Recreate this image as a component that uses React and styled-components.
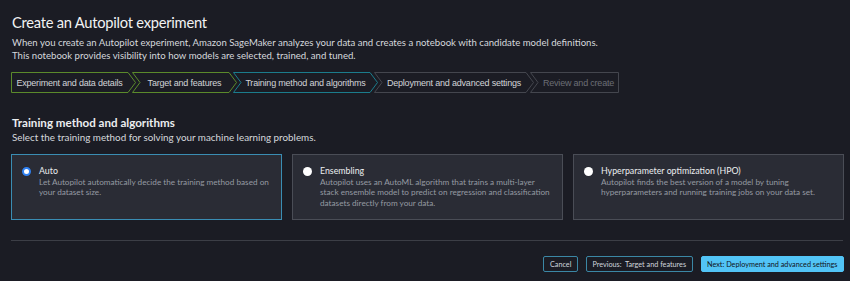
import React from 'react';
import styled, { createGlobalStyle } from 'styled-components';

const GlobalStyle = createGlobalStyle`
  html, body {
    margin: 0;
    padding: 0;
    background: #1b1c24;
  }
  body {
    font-family: Lato, "Noto Sans", sans-serif;
    color: #e9ebed;
  }
`;

const steps = [
  { label: 'Experiment and data details', width: 125, color: '#5b8a2b', state: 'done' },
  { label: 'Target and features', width: 105, color: '#5b8a2b', state: 'done' },
  { label: 'Training method and algorithms', width: 145, color: '#1b7c8c', state: 'current' },
  { label: 'Deployment and advanced settings', width: 160, color: '#44464e', state: 'todo' },
  { label: 'Review and create', width: 89, color: '#44464e', state: 'disabled' },
];

const methods = [
  {
    title: 'Auto',
    lines: ['Let Autopilot automatically decide the training method based on', 'your dataset size.'],
    selected: true,
  },
  {
    title: 'Ensembling',
    lines: [
      'Autopilot uses an AutoML algorithm that trains a multi-layer',
      'stack ensemble model to predict on regression and classification',
      'datasets directly from your data.',
    ],
  },
  {
    title: 'Hyperparameter optimization (HPO)',
    lines: [
      'Autopilot finds the best version of a model by tuning',
      'hyperparameters and running training jobs on your data set.',
    ],
  },
];

const STEP_H = 21;
const TIP = 8;

const chevronPoints = (w, first, last) => {
  const h = STEP_H - 1;
  const m = h / 2;
  const right = last
    ? [`${w - 0.5},0.5`, `${w - 0.5},${h + 0.5}`]
    : [`${w - TIP},0.5`, `${w - 0.5},${m + 0.5}`, `${w - TIP},${h + 0.5}`];
  const left = first ? [`0.5,${h + 0.5}`, '0.5,0.5'] : ['0.5,' + (h + 0.5), `${TIP},${m + 0.5}`, '0.5,0.5'];
  return [...right, ...left].join(' ');
};

const Step = ({ label, width, color, state, first, last }) => (
  <StepItem $width={width} $first={first} $last={last} $state={state}>
    <svg width={width} height={STEP_H}>
      <polygon points={chevronPoints(width, first, last)} fill="none" stroke={color} strokeWidth="1" />
    </svg>
    <span>{label}</span>
  </StepItem>
);

const Radio = ({ checked }) => <RadioDot $checked={checked} />;

export default function App() {
  return (
    <>
      <GlobalStyle />
      <Page>
        <Title>Create an Autopilot experiment</Title>
        <Intro>
          When you create an Autopilot experiment, Amazon SageMaker analyzes your data and creates a notebook with candidate model definitions.
          <br />
          This notebook provides visibility into how models are selected, trained, and tuned.
        </Intro>

        <Stepper>
          {steps.map((s, i) => (
            <Step key={s.label} {...s} first={i === 0} last={i === steps.length - 1} />
          ))}
        </Stepper>

        <SectionTitle>Training method and algorithms</SectionTitle>
        <SectionHint>Select the training method for solving your machine learning problems.</SectionHint>

        <CardRow>
          {methods.map((m) => (
            <Card key={m.title} $selected={m.selected}>
              <Radio checked={m.selected} />
              <CardBody>
                <CardTitle>{m.title}</CardTitle>
                <CardText>
                  {m.lines.map((l, i) => (
                    <React.Fragment key={i}>
                      {i > 0 && <br />}
                      {l}
                    </React.Fragment>
                  ))}
                </CardText>
              </CardBody>
            </Card>
          ))}
        </CardRow>

        <Divider />

        <Footer>
          <Button>Cancel</Button>
          <Button>Previous:&nbsp; Target and features</Button>
          <Button $primary>Next: Deployment and advanced settings</Button>
        </Footer>
      </Page>
    </>
  );
}

const Page = styled.div`
  padding: 11px 6px 0 11px;
  display: flex;
  flex-direction: column;
`;

const Title = styled.h1`
  margin: 0 0 0 1px;
  font-size: 14.7px;
  line-height: 22px;
  font-weight: 400;
  letter-spacing: -0.25px;
  color: #f2f3f3;
`;

const Intro = styled.p`
  margin: 3px 0 0 1px;
  font-size: 9.6px;
  line-height: 13px;
  color: #d5d8dc;
`;

const Stepper = styled.div`
  display: flex;
  margin-top: 10px;
  height: ${STEP_H}px;
`;

const StepItem = styled.div`
  position: relative;
  flex: none;
  width: ${(p) => p.$width}px;
  height: ${STEP_H}px;
  margin-left: ${(p) => (p.$first ? 0 : -4)}px;
  display: flex;
  align-items: center;
  justify-content: center;
  padding: 0 ${(p) => (p.$last ? 0 : TIP)}px 0 ${(p) => (p.$first ? 0 : TIP)}px;
  box-sizing: border-box;

  svg {
    position: absolute;
    left: 0;
    top: 0;
  }

  span {
    position: relative;
    font-family: "Liberation Sans", Arial, sans-serif;
    font-size: 9px;
    letter-spacing: -0.2px;
    white-space: nowrap;
    color: ${(p) => (p.$state === 'disabled' ? '#6b6e76' : '#d2d4d8')};
  }
`;

const SectionTitle = styled.h2`
  margin: 22px 0 0 1px;
  font-size: 11.6px;
  line-height: 15px;
  font-weight: 700;
  color: #eceef0;
`;

const SectionHint = styled.p`
  margin: 1px 0 0 1px;
  font-size: 9.85px;
  line-height: 13px;
  color: #d5d8dc;
`;

const CardRow = styled.div`
  display: grid;
  grid-template-columns: repeat(3, 1fr);
  gap: 10px;
  margin-top: 10px;
`;

const Card = styled.div`
  height: 66px;
  box-sizing: border-box;
  display: flex;
  align-items: flex-start;
  gap: 8px;
  padding: 10px 10px 0 10px;
  background: #2a2c35;
  border: 1px solid ${(p) => (p.$selected ? '#3a8db3' : '#4a4d56')};
`;

const RadioDot = styled.span`
  flex: none;
  width: 9px;
  height: 9px;
  margin-top: 1.5px;
  border-radius: 50%;
  box-sizing: border-box;
  background: #ffffff;
  border: ${(p) => (p.$checked ? '2.5px solid #2f80f0' : 'none')};
`;

const CardBody = styled.div`
  display: flex;
  flex-direction: column;
`;

const CardTitle = styled.div`
  font-size: 8.8px;
  line-height: 11px;
  color: #eceef0;
`;

const CardText = styled.div`
  margin-top: 1px;
  font-size: 8.2px;
  line-height: 10.3px;
  color: #959aa2;
  white-space: nowrap;
`;

const Divider = styled.hr`
  margin: 20px 1px 0 0;
  border: none;
  border-top: 1.5px solid #3c3e46;
`;

const Footer = styled.div`
  display: flex;
  justify-content: flex-end;
  gap: 8px;
  margin-top: 15px;
`;

const Button = styled.button`
  height: 16px;
  padding: 0 5.5px;
  font-family: Lato, "Noto Sans", sans-serif;
  font-size: 7.25px;
  border-radius: 2px;
  border: 1px solid ${(p) => (p.$primary ? '#52c4f6' : '#3b87a5')};
  background: ${(p) => (p.$primary ? '#52c4f6' : 'transparent')};
  color: ${(p) => (p.$primary ? '#111318' : '#cfd6dd')};
  cursor: pointer;
  white-space: nowrap;
`;
